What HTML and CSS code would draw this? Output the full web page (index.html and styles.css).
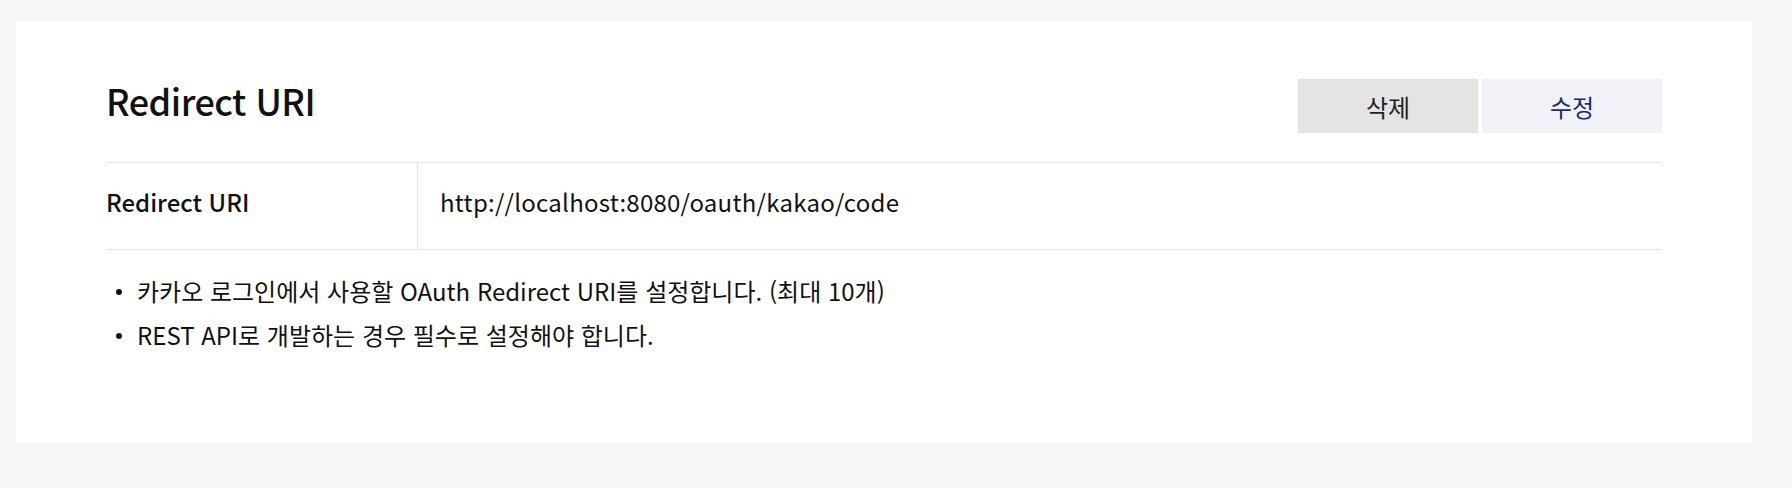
FILE: index.html
```html
<!DOCTYPE html>
<html lang="ko">

<head>
  <meta charset="UTF-8">
  <meta name="viewport" content="width=device-width, initial-scale=1.0">
  <title>Redirect URI</title>
  <link rel="stylesheet" href="styles.css">
</head>

<body>
  <div class="card">
    <div class="cardHeader">
      <h2 class="cardTitle">Redirect URI</h2>
      <div class="btnGroup">
        <button class="btn btnDelete">삭제</button>
        <button class="btn btnEdit">수정</button>
      </div>
    </div>

    <div class="infoTable">
      <div class="infoLabel">Redirect URI</div>
      <div class="infoValue" lang="en">http://localhost:8080/oauth/kakao/code</div>
    </div>

    <ul class="noteList">
      <li>카카오 로그인에서 사용할 OAuth Redirect URI를 설정합니다. (최대 10개)</li>
      <li>REST API로 개발하는 경우 필수로 설정해야 합니다.</li>
    </ul>
  </div>
</body>

</html>
```

FILE: styles.css
```css
body {
  font-family: "Noto Sans CJK KR", "Noto Sans", sans-serif;
  margin: 0;
  padding: 21px 40px 44px 16px;
  background-color: #f5f7f6;
  color: #111;
}

.card {
  background-color: #fff;
  padding: 58px 90px 86px;
}

.cardHeader {
  display: flex;
  justify-content: space-between;
  align-items: center;
  margin-bottom: 29px;
}

.cardTitle {
  margin: 0 0 10px;
  font-size: 36px;
  line-height: 1.2;
  font-weight: 500;
  letter-spacing: -0.5px;
}

.btnGroup {
  display: flex;
  gap: 4px;
}

.btn {
  width: 180px;
  height: 54px;
  border: none;
  font-family: inherit;
  font-size: 24px;
  cursor: pointer;
}

.btnDelete {
  background-color: #e4e4e4;
  color: #222;
}

.btnEdit {
  background-color: #f1f2f8;
  color: #1b2a6e;
}

.infoTable {
  display: flex;
  border-top: 1px solid #e3e3e3;
  border-bottom: 1px solid #e3e3e3;
  height: 86px;
}

.infoLabel {
  width: 312px;
  display: flex;
  align-items: center;
  padding-bottom: 10px;
  box-sizing: border-box;
  font-size: 24px;
  font-weight: 500;
  border-right: 1px solid #e3e3e3;
}

.infoValue {
  display: flex;
  align-items: center;
  padding: 0 0 10px 22px;
  font-size: 24px;
  letter-spacing: 0.25px;
}

.noteList {
  margin: 19px 0 0;
  padding: 0 0 0 10px;
  list-style: none;
}

.noteList li {
  position: relative;
  padding-left: 21px;
  font-size: 24px;
  line-height: 44px;
}

.noteList li::before {
  content: "";
  position: absolute;
  left: 0;
  top: 20px;
  width: 6px;
  height: 6px;
  border-radius: 50%;
  background-color: #111;
}
```
